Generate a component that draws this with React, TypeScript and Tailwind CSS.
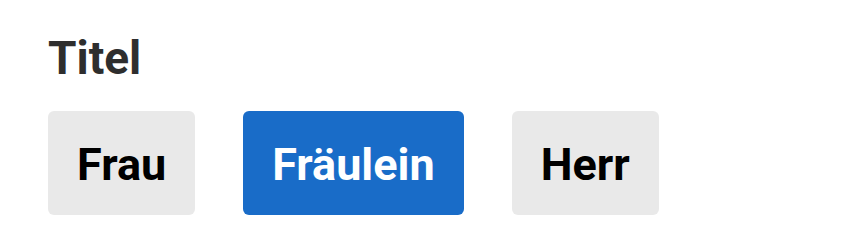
import { useState } from "react";

const options = ["Frau", "Fräulein", "Herr"];

export default function App() {
  const [selected, setSelected] = useState("Fräulein");

  return (
    <div className="bg-white w-[863px] h-[240px] pl-[48px] pt-[35px] font-['Roboto',sans-serif]">
      <h2 className="font-bold text-[#2e2e2e] text-[46px] leading-[46px]">Titel</h2>
      <div className="flex flex-row gap-[48px] mt-[30px]">
        {options.map((opt) => {
          const active = opt === selected;
          return (
            <button
              key={opt}
              onClick={() => setSelected(opt)}
              className={
                active
                  ? "flex items-center justify-center h-[104px] px-[29px] pt-[4px] rounded-[6px] bg-[#196cc8] text-white font-bold text-[45px] leading-[46px]"
                  : "flex items-center justify-center h-[104px] px-[29px] pt-[4px] rounded-[6px] bg-[#e9e9e9] text-black font-bold text-[45px] leading-[46px]"
              }
            >
              {opt}
            </button>
          );
        })}
      </div>
    </div>
  );
}
